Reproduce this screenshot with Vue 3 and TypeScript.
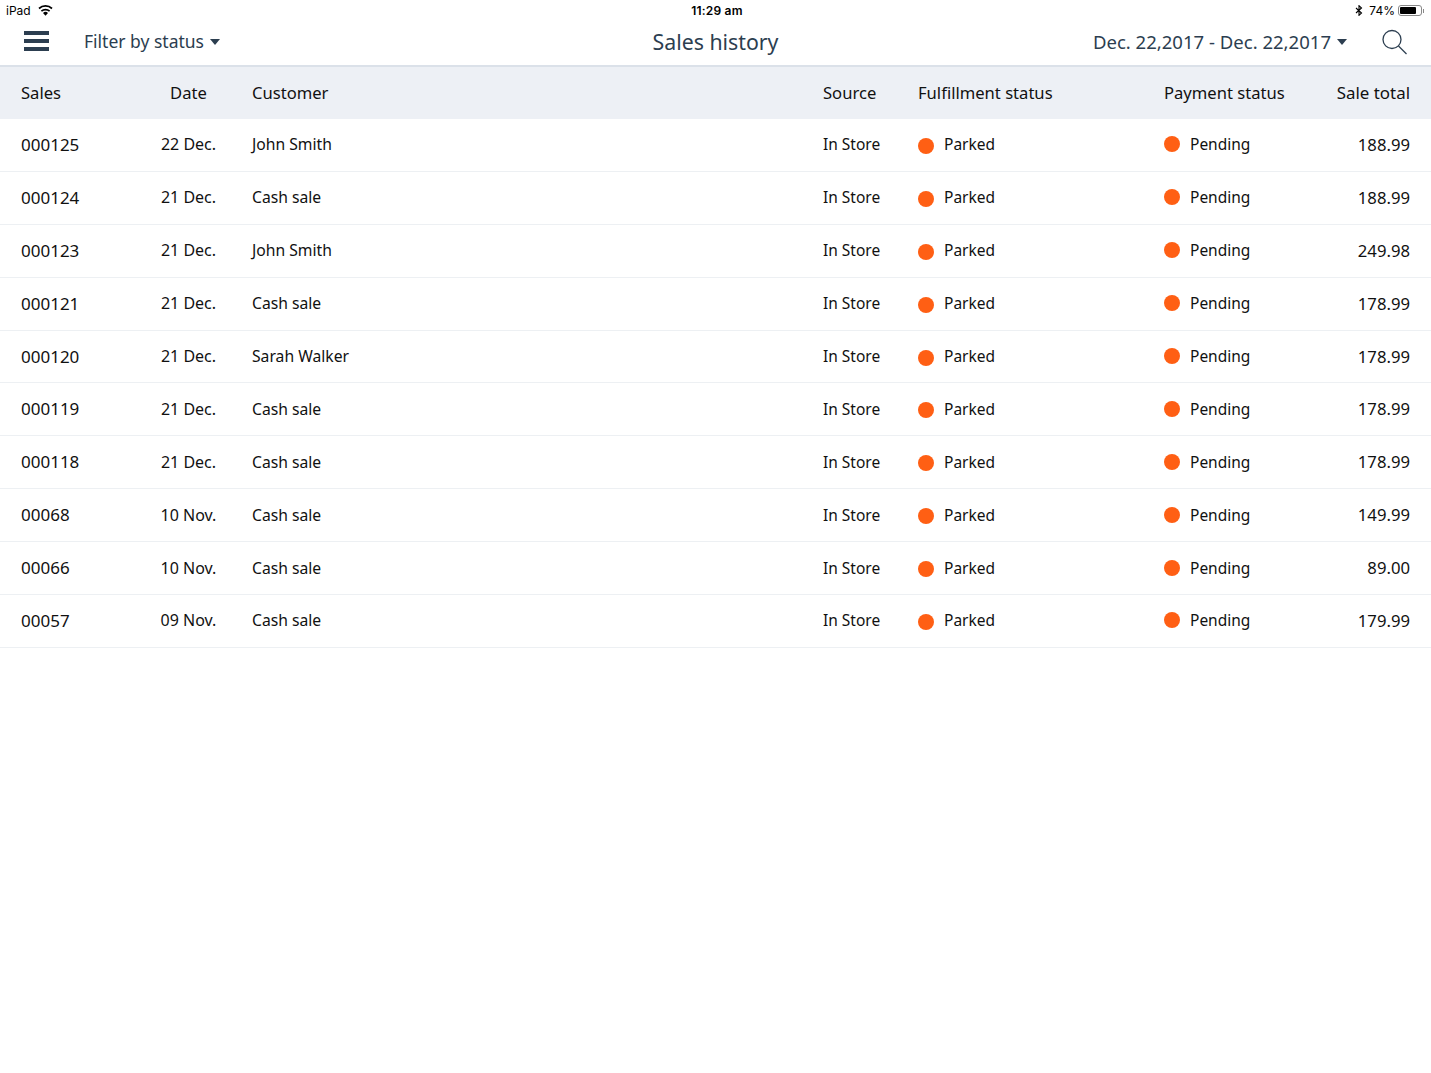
<script setup lang="ts">
interface Sale {
  id: string
  date: string
  customer: string
  total: string
}

const sales: Sale[] = [
  { id: '000125', date: '22 Dec.', customer: 'John Smith', total: '188.99' },
  { id: '000124', date: '21 Dec.', customer: 'Cash sale', total: '188.99' },
  { id: '000123', date: '21 Dec.', customer: 'John Smith', total: '249.98' },
  { id: '000121', date: '21 Dec.', customer: 'Cash sale', total: '178.99' },
  { id: '000120', date: '21 Dec.', customer: 'Sarah Walker', total: '178.99' },
  { id: '000119', date: '21 Dec.', customer: 'Cash sale', total: '178.99' },
  { id: '000118', date: '21 Dec.', customer: 'Cash sale', total: '178.99' },
  { id: '00068', date: '10 Nov.', customer: 'Cash sale', total: '149.99' },
  { id: '00066', date: '10 Nov.', customer: 'Cash sale', total: '89.00' },
  { id: '00057', date: '09 Nov.', customer: 'Cash sale', total: '179.99' },
]
</script>

<template>
  <div class="page">
    <div class="status">
      <div class="status-left">
        <span>iPad</span>
        <svg class="wifi" width="15" height="11" viewBox="0 0 15 11">
          <path d="M7.5 10.8 L5 8 A3.6 3.6 0 0 1 10 8 Z" fill="#000" />
          <path d="M3.4 6.2 A6 6 0 0 1 11.6 6.2" fill="none" stroke="#000" stroke-width="1.7" />
          <path d="M1 3.5 A9.6 9.6 0 0 1 14 3.5" fill="none" stroke="#000" stroke-width="1.7" />
        </svg>
      </div>
      <div class="status-time">11:29 am</div>
      <div class="status-right">
        <svg class="bt" width="8" height="11" viewBox="0 0 8 11">
          <path d="M1 3 L6.5 8 L4 10.3 V0.7 L6.5 3 L1 8" fill="none" stroke="#000" stroke-width="1.1" />
        </svg>
        <span>74%</span>
        <span class="battery"><span class="battery-fill"></span></span>
        <span class="battery-cap"></span>
      </div>
    </div>

    <header class="nav">
      <div class="nav-left">
        <div class="burger"><i></i><i></i><i></i></div>
        <div class="filter">Filter by status<span class="caret"></span></div>
      </div>
      <h1 class="title">Sales history</h1>
      <div class="nav-right">
        <div class="range">Dec. 22,2017 - Dec. 22,2017<span class="caret"></span></div>
        <svg class="search" width="27" height="27" viewBox="0 0 27 27">
          <circle cx="11" cy="10.5" r="9" fill="none" stroke="#2c3e50" stroke-width="1.3" />
          <path d="M17.5 17 L25.5 25" fill="none" stroke="#2c3e50" stroke-width="1.3" />
        </svg>
      </div>
    </header>

    <div class="row head">
      <div>Sales</div>
      <div class="center">Date</div>
      <div class="cust">Customer</div>
      <div>Source</div>
      <div>Fulfillment status</div>
      <div>Payment status</div>
      <div class="right total-head">Sale total</div>
    </div>
    <div v-for="s in sales" :key="s.id" class="row item">
      <div class="num">{{ s.id }}</div>
      <div class="center date">{{ s.date }}</div>
      <div class="cust">{{ s.customer }}</div>
      <div class="plain">In Store</div>
      <div class="state"><span class="dot low"></span>Parked</div>
      <div class="state"><span class="dot"></span>Pending</div>
      <div class="right total">{{ s.total }}</div>
    </div>
  </div>
</template>

<style>
html,
body {
  margin: 0;
  background: #fff;
}
</style>

<style scoped>
.page {
  width: 1431px;
  min-height: 1073px;
  background: #fff;
  font-family: "Noto Sans", sans-serif;
  color: #111;
}
.status {
  height: 21px;
  display: grid;
  grid-template-columns: 1fr auto 1fr;
  align-items: center;
  padding: 0 7px 0 6px;
  font-family: Inter, "Liberation Sans", sans-serif;
  font-size: 12px;
  color: #000;
}
.status-left {
  display: flex;
  align-items: center;
  gap: 7px;
}
.status-time {
  font-weight: 600;
  font-size: 12px;
  letter-spacing: 0.2px;
  padding-left: 4px;
}
.status-right {
  display: flex;
  align-items: center;
  justify-content: flex-end;
}
.bt {
  margin-right: 6px;
}
.battery {
  margin-left: 3px;
  width: 24px;
  height: 11px;
  border: 1px solid #888;
  border-radius: 3px;
  padding: 1px;
  box-sizing: border-box;
  display: block;
}
.battery-fill {
  display: block;
  width: 16px;
  height: 7px;
  background: #000;
  border-radius: 1px;
}
.battery-cap {
  width: 1px;
  height: 4px;
  background: #888;
  margin-left: 1px;
}
.nav {
  height: 40px;
  padding-bottom: 4px;
  display: grid;
  grid-template-columns: 1fr auto 1fr;
  align-items: center;
  border-bottom: 2px solid #dbe1e9;
  color: #2c3e50;
}
.nav-left {
  display: flex;
  align-items: center;
  padding-left: 24px;
}
.burger {
  width: 25px;
  margin-right: 35px;
  display: flex;
  flex-direction: column;
  gap: 4px;
}
.burger i {
  display: block;
  height: 4px;
  background: #2c3e50;
}
.filter {
  display: flex;
  align-items: center;
  font-size: 17.5px;
}
.range {
  display: flex;
  align-items: center;
  font-size: 18.55px;
}
.caret {
  margin-left: 6px;
  margin-top: 2px;
  width: 0;
  height: 0;
  border-left: 5.5px solid transparent;
  border-right: 5.5px solid transparent;
  border-top: 6px solid #2c3e50;
}
.title {
  margin: 0;
  font-size: 21.3px;
  font-weight: 400;
}
.nav-right {
  display: flex;
  align-items: center;
  justify-content: flex-end;
  padding-right: 23px;
}
.search {
  margin-left: 34px;
  margin-top: 3px;
}
.row {
  display: grid;
  grid-template-columns: 120px 95px 587px 95px 246px 1fr auto;
  align-items: center;
  padding: 0 21px;
  font-size: 15.7px;
}
.row > div {
  padding-bottom: 1px;
}
.head {
  height: 52px;
  background: #edf0f5;
  font-size: 16.6px;
}
.item {
  height: 51.9px;
  border-bottom: 1px solid #edf0f3;
}
.num {
  font-size: 17px;
}
.date {
  font-size: 16px;
}
.total {
  font-size: 16.7px;
}
.total-head {
  font-size: 16.9px;
}
.plain,
.state {
  font-size: 15.5px;
}
.center {
  text-align: center;
}
.row > .cust {
  padding-left: 16px;
}
.right {
  text-align: right;
}
.state {
  display: flex;
  align-items: center;
}
.dot {
  width: 16px;
  height: 16px;
  border-radius: 50%;
  background: #ff5f14;
  margin-right: 10px;
  flex: none;
}
.dot.low {
  margin-top: 3px;
}
</style>
